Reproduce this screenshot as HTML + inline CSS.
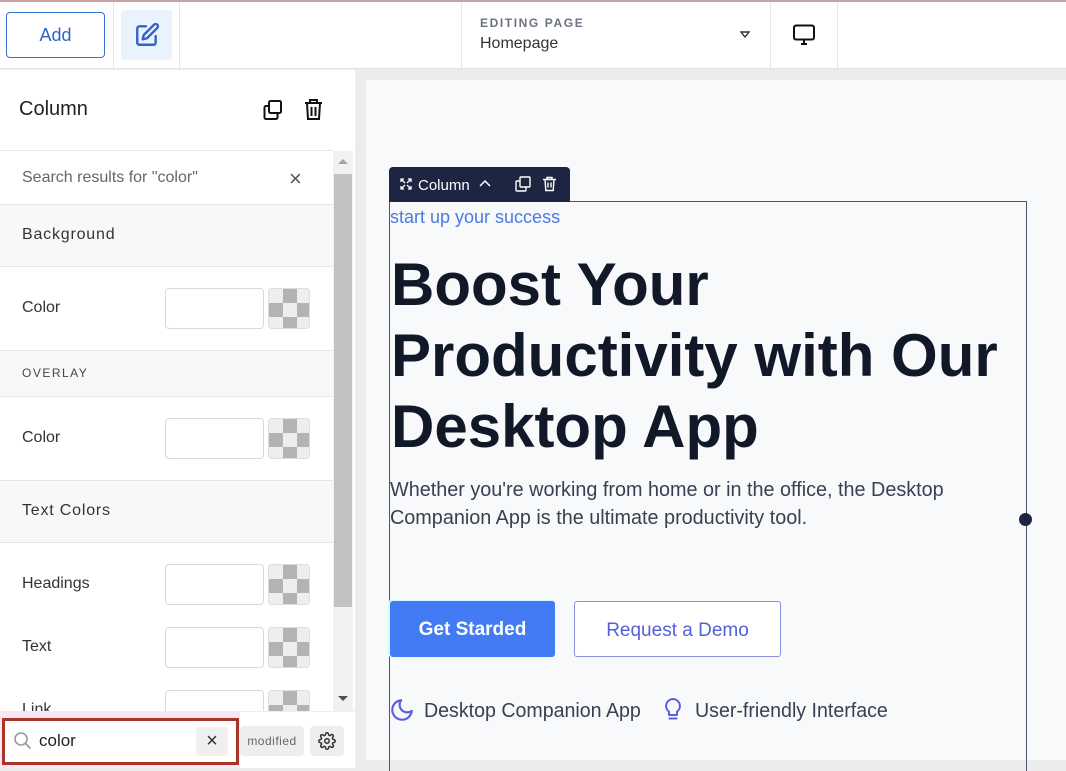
<!DOCTYPE html>
<html><head><meta charset="utf-8">
<style>
*{box-sizing:border-box;margin:0;padding:0}
body{width:1066px;height:768px;overflow:hidden;position:relative;background:#ececec;font-family:"Liberation Sans",sans-serif;color:#222}
.a{position:absolute}
.sw{position:absolute;width:99px;height:41px;border:1px solid #d9d9d9;border-radius:4px;background:#fff}
.ck{position:absolute;width:42px;height:41px;border:1px solid #ddd;border-radius:4px;overflow:hidden;
background:conic-gradient(#b3b3b3 0 25%,#eee 0 50%,#b3b3b3 0 75%,#eee 0) ;background-size:28px 28px;background-position:0 0}
.lbl{position:absolute;left:22px;font-size:16px;color:#333}
.sec{position:absolute;left:0;width:333px;background:#f7f8fa;border-top:1px solid #e6e6e6;border-bottom:1px solid #e6e6e6}
</style></head><body>
<!-- top bar -->
<div class="a" style="left:0;top:0;width:1066px;height:69px;background:#fff;border-bottom:1px solid #e3e3e3"></div>
<div class="a" style="left:0;top:0;width:1066px;height:2px;background:#c9a3a3"></div>
<div class="a" style="left:6px;top:12px;width:99px;height:46px;border:1px solid #3b6fd6;border-radius:4px;color:#2f63c9;font-size:18px;text-align:center;line-height:44px">Add</div>
<div class="a" style="left:113px;top:2px;width:1px;height:67px;background:#e6e6e6"></div>
<div class="a" style="left:121px;top:10px;width:51px;height:50px;background:#eaf2fd;border-radius:3px"></div>
<svg class="a" style="left:134px;top:22px" width="26" height="26" viewBox="0 0 24 24" fill="none" stroke="#2f63c9" stroke-width="2.2" stroke-linecap="round" stroke-linejoin="round"><path d="M11 4H5a2 2 0 0 0-2 2v13a2 2 0 0 0 2 2h13a2 2 0 0 0 2-2v-6"/><path d="M18.5 2.5a2.1 2.1 0 0 1 3 3L12 15l-4 1 1-4z"/></svg>
<div class="a" style="left:179px;top:2px;width:1px;height:67px;background:#e6e6e6"></div>
<div class="a" style="left:461px;top:2px;width:1px;height:67px;background:#e6e6e6"></div>
<div class="a" style="left:480px;top:16px;font-size:12px;letter-spacing:1.6px;color:#6b7280;font-weight:bold">EDITING PAGE</div>
<div class="a" style="left:480px;top:35px;font-size:16px;color:#333">Homepage</div>
<svg class="a" style="left:740px;top:31px" width="10" height="8" viewBox="0 0 10 8"><path d="M1 1h8L5 6z" fill="none" stroke="#333" stroke-width="1.4"/></svg>
<div class="a" style="left:770px;top:2px;width:1px;height:67px;background:#e6e6e6"></div>
<svg class="a" style="left:792px;top:24px" width="24" height="22" viewBox="0 0 24 22" fill="none" stroke="#111" stroke-width="2"><rect x="2" y="1.5" width="20" height="14" rx="2"/><path d="M9 20h6M12 16v4"/></svg>
<div class="a" style="left:837px;top:2px;width:1px;height:67px;background:#e6e6e6"></div>

<!-- left panel -->
<div class="a" style="left:0;top:70px;width:355px;height:698px;background:#fff"></div>
<div class="a" style="left:19px;top:98px;font-size:20px;color:#222">Column</div>
<svg class="a" style="left:262px;top:99px" width="22" height="22" viewBox="0 0 22 22" fill="none" stroke="#111" stroke-width="2"><rect x="7" y="2" width="12" height="12" rx="1.5"/><path d="M7 7H4a1.5 1.5 0 0 0-1.5 1.5v10A1.5 1.5 0 0 0 4 20h10a1.5 1.5 0 0 0 1.5-1.5V15"/></svg>
<svg class="a" style="left:303px;top:98px" width="21" height="23" viewBox="0 0 21 23" fill="none" stroke="#111" stroke-width="2"><path d="M2 5h17M7 5V2h7v3M4 5l1 16h11l1-16M8.5 9v9M12.5 9v9"/></svg>
<div class="a" style="left:0;top:150px;width:333px;height:1px;background:#e6e6e6"></div>
<div class="a" style="left:22px;top:169px;font-size:16px;color:#666">Search results for "color"</div>
<div class="a" style="left:289px;top:166px;font-size:22px;color:#555">×</div>
<div class="sec" style="top:204px;height:63px"></div>
<div class="a" style="left:22px;top:226px;font-size:16px;letter-spacing:0.8px;color:#333">Background</div>
<div class="lbl" style="top:299px">Color</div>
<div class="sw" style="left:165px;top:288px"></div><div class="ck" style="left:268px;top:288px"></div>
<div class="sec" style="top:350px;height:47px"></div>
<div class="a" style="left:22px;top:366px;font-size:12px;letter-spacing:1.5px;color:#444">OVERLAY</div>
<div class="lbl" style="top:429px">Color</div>
<div class="sw" style="left:165px;top:418px"></div><div class="ck" style="left:268px;top:418px"></div>
<div class="sec" style="top:480px;height:63px"></div>
<div class="a" style="left:22px;top:502px;font-size:16px;letter-spacing:0.8px;color:#333">Text Colors</div>
<div class="lbl" style="top:575px">Headings</div>
<div class="sw" style="left:165px;top:564px"></div><div class="ck" style="left:268px;top:564px"></div>
<div class="lbl" style="top:638px">Text</div>
<div class="sw" style="left:165px;top:627px"></div><div class="ck" style="left:268px;top:627px"></div>
<div class="lbl" style="top:701px">Link</div>
<div class="sw" style="left:165px;top:690px"></div><div class="ck" style="left:268px;top:690px"></div>
<!-- scrollbar -->
<div class="a" style="left:333px;top:151px;width:20px;height:560px;background:#f1f1f1"></div>
<div class="a" style="left:334px;top:174px;width:18px;height:433px;background:#c1c1c1"></div>
<svg class="a" style="left:338px;top:158px" width="10" height="7"><path d="M0 6L5 1 10 6z" fill="#a3a3a3"/></svg>
<svg class="a" style="left:338px;top:695px" width="10" height="7"><path d="M0 1L5 6 10 1z" fill="#505050"/></svg>
<!-- bottom search -->
<div class="a" style="left:0;top:711px;width:355px;height:57px;background:#fff;border-top:1px solid #eee"></div>
<div class="a" style="left:0;top:711px;width:240px;height:57px;background:#fde6f4"></div>
<div class="a" style="left:2px;top:718px;width:237px;height:47px;border:3px solid #a8342a;background:#fff"></div>
<svg class="a" style="left:13px;top:731px" width="20" height="20" viewBox="0 0 20 20" fill="none" stroke="#999" stroke-width="1.6"><circle cx="8" cy="8" r="6"/><path d="M12.5 12.5l5 5"/></svg>
<div class="a" style="left:39px;top:731px;font-size:17px;color:#222">color</div>
<div class="a" style="left:196px;top:727px;width:32px;height:29px;background:#efefef;border-radius:3px;text-align:center;font-size:20px;line-height:28px;color:#333">×</div>
<div class="a" style="left:240px;top:726px;width:64px;height:30px;background:#eee;border-radius:4px;text-align:center;font-size:12px;line-height:30px;color:#666;letter-spacing:0.5px">modified</div>
<div class="a" style="left:310px;top:726px;width:34px;height:30px;background:#eee;border-radius:4px"></div>
<svg class="a" style="left:318px;top:732px" width="18" height="18" viewBox="0 0 24 24" fill="none" stroke="#333" stroke-width="2"><circle cx="12" cy="12" r="3"/><path d="M19.4 15a1.7 1.7 0 0 0 .3 1.8l.1.1a2 2 0 1 1-2.8 2.8l-.1-.1a1.7 1.7 0 0 0-1.8-.3 1.7 1.7 0 0 0-1 1.5V21a2 2 0 1 1-4 0v-.1a1.7 1.7 0 0 0-1.1-1.5 1.7 1.7 0 0 0-1.8.3l-.1.1a2 2 0 1 1-2.8-2.8l.1-.1a1.7 1.7 0 0 0 .3-1.8 1.7 1.7 0 0 0-1.5-1H3a2 2 0 1 1 0-4h.1a1.7 1.7 0 0 0 1.5-1.100 1.7 1.7 0 0 0-.3-1.8l-.1-.1a2 2 0 1 1 2.8-2.8l.1.1a1.7 1.7 0 0 0 1.8.3H9a1.7 1.7 0 0 0 1-1.5V3a2 2 0 1 1 4 0v.1a1.7 1.7 0 0 0 1 1.5 1.7 1.7 0 0 0 1.8-.3l.1-.1a2 2 0 1 1 2.8 2.8l-.1.1a1.7 1.7 0 0 0-.3 1.8V9a1.7 1.7 0 0 0 1.5 1H21a2 2 0 1 1 0 4h-.1a1.7 1.7 0 0 0-1.5 1z"/></svg>

<!-- canvas page -->
<div class="a" style="left:366px;top:80px;width:700px;height:680px;background:#f8f9fb"></div>
<div class="a" style="left:389px;top:201px;width:638px;height:570px;border:1px solid #4b5563;border-bottom:none"></div>
<div class="a" style="left:389px;top:167px;width:181px;height:35px;background:#1e2540;border-radius:4px 4px 0 0"></div>
<svg class="a" style="left:400px;top:178px" width="12" height="12" viewBox="0 0 12 12" fill="none" stroke="#fff" stroke-width="1.3"><path d="M1 4V1h3M8 1h3v3M11 8v3H8M4 11H1V8M1 1l4 4M11 1L7 5M11 11L7 7M1 11l4-4"/></svg>
<div class="a" style="left:418px;top:177px;font-size:15px;color:#fff">Column</div>
<svg class="a" style="left:479px;top:179px" width="12" height="8"><path d="M1 7l5-5 5 5" fill="none" stroke="#fff" stroke-width="1.5"/></svg>
<svg class="a" style="left:515px;top:176px" width="16" height="16" viewBox="0 0 16 16" fill="none" stroke="#fff" stroke-width="1.4"><rect x="5" y="1" width="10" height="10" rx="1"/><path d="M5 5H2a1 1 0 0 0-1 1v8a1 1 0 0 0 1 1h8a1 1 0 0 0 1-1v-3"/></svg>
<svg class="a" style="left:542px;top:176px" width="15" height="16" viewBox="0 0 15 16" fill="none" stroke="#fff" stroke-width="1.4"><path d="M1 3.5h13M5 3.5V1.5h5v2M3 3.5l.8 11h7.4l.8-11M6 6.5v5M9 6.5v5"/></svg>
<div class="a" style="left:390px;top:207px;font-size:18px;color:#4a7be0">start up your success</div>
<div class="a" style="left:391px;top:249px;font-size:60px;font-weight:bold;color:#111827;line-height:71px;white-space:nowrap">Boost Your<br>Productivity with Our<br>Desktop App</div>
<div class="a" style="left:390px;top:476px;font-size:20px;color:#374151;line-height:28px;white-space:nowrap;transform:scaleX(0.99);transform-origin:0 0">Whether you're working from home or in the office, the Desktop<br>Companion App is the ultimate productivity tool.</div>
<div class="a" style="left:1019px;top:513px;width:13px;height:13px;border-radius:50%;background:#1e2540"></div>
<div class="a" style="left:388px;top:600px;width:167px;height:57px;background:#cffafe;border-radius:3px"></div>
<div class="a" style="left:390px;top:601px;width:165px;height:56px;background:#437bf5;border-radius:3px;color:#fff;font-size:19px;font-weight:bold;text-align:center;line-height:58px">Get Starded</div>
<div class="a" style="left:574px;top:601px;width:207px;height:56px;border:1px solid #8b8fe0;border-radius:3px;color:#5560d6;font-size:19px;text-align:center;line-height:58px;background:#fff">Request a Demo</div>
<svg class="a" style="left:389px;top:697px" width="26" height="26" viewBox="0 0 24 24" fill="none" stroke="#5a5ee0" stroke-width="2" stroke-linecap="round" stroke-linejoin="round"><path d="M21 12.8A9 9 0 1 1 11.2 3 7 7 0 0 0 21 12.8z"/></svg>
<div class="a" style="left:424px;top:700px;font-size:20px;color:#374151;white-space:nowrap;transform:scaleX(0.98);transform-origin:0 0">Desktop Companion App</div>
<svg class="a" style="left:662px;top:697px" width="22" height="26" viewBox="0 0 22 26" fill="none" stroke="#5a5ee0" stroke-width="2" stroke-linejoin="round"><path d="M11 2a7 7 0 0 0-4 12.7V18h8v-3.3A7 7 0 0 0 11 2z"/><path d="M7.5 21.5h7" stroke-linecap="round"/></svg>
<div class="a" style="left:695px;top:700px;font-size:20px;color:#374151;white-space:nowrap;transform:scaleX(0.98);transform-origin:0 0">User-friendly Interface</div>
</body></html>
